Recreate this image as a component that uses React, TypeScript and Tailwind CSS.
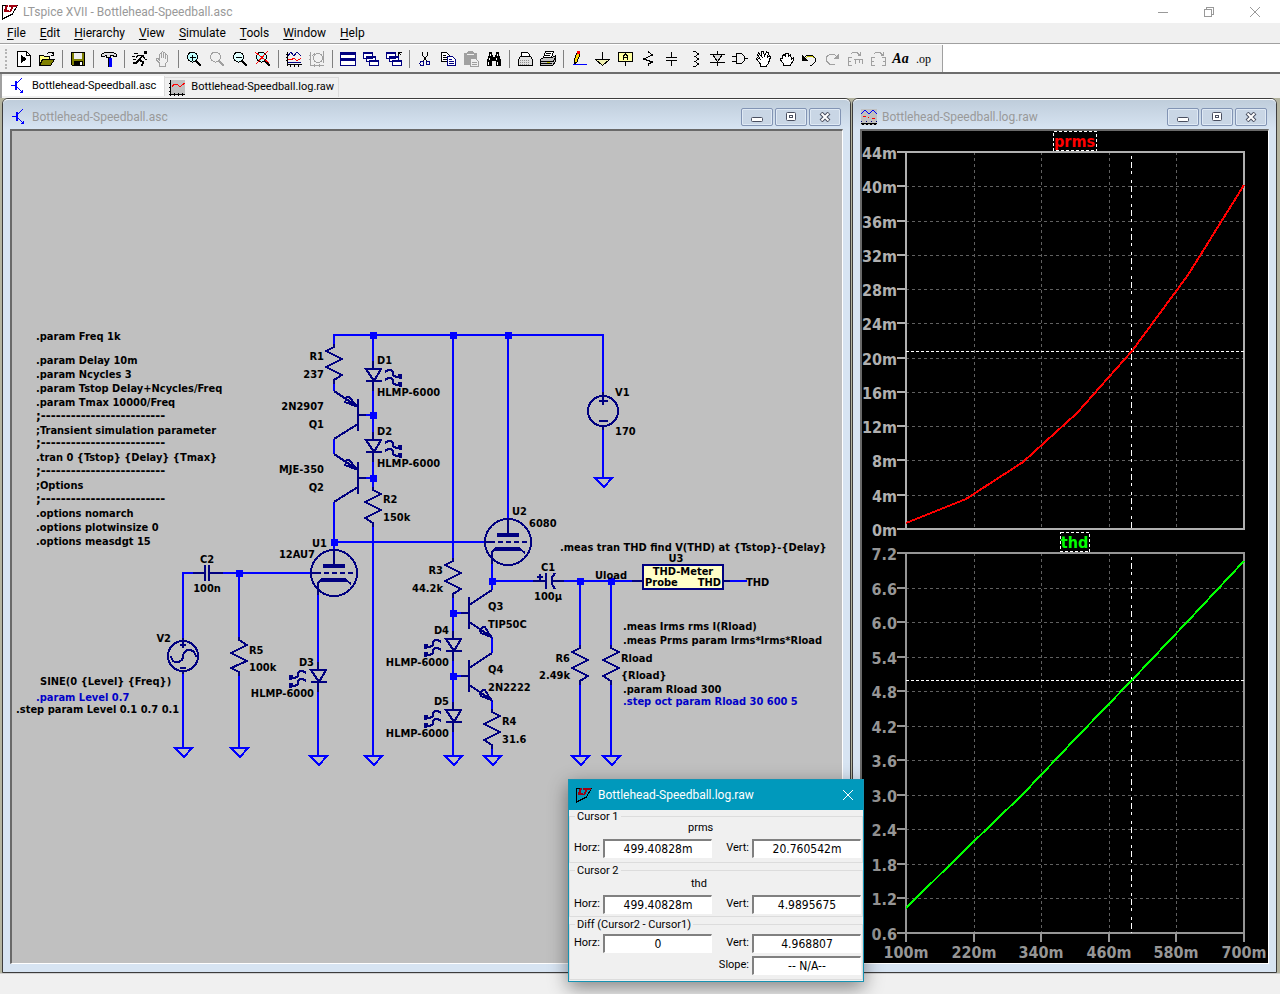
import type { ReactNode } from "react";

const WIRE = "#0000ff";
const PART = "#000080";

/* ---------- toolbar ---------- */

function Svg16({ children }: { children: ReactNode }) {
  return (
    <svg width="16" height="16" viewBox="0 0 16 16" fill="none" stroke="#000" shapeRendering="crispEdges">
      {children}
    </svg>
  );
}

const GREY = "#a0a0a0";

function Lens({ stroke = "#000", glass = "#fff", children }: { stroke?: string; glass?: string; children?: ReactNode }) {
  return (
    <Svg16>
      <circle cx="6.5" cy="6" r="5" fill={glass} stroke={stroke} />
      <path d="M10 10l5 5" stroke={stroke} strokeWidth="2" />
      {children}
    </Svg16>
  );
}

function Windows({ arrow = false }: { arrow?: boolean }) {
  return (
    <Svg16>
      <g fill="#fff" stroke={PART}>
        <path d="M.5 1.500h9v6h-9zM3.500 5.500h9v5h-9zM6.500 9.500h9v5h-9z" />
        <path d="M0 2h10M3 6h10M6 10h10" strokeWidth="2" />
      </g>
      {arrow && <path d="M12.500 4.500v-3h3M12.500 1.500l3 3" />}
    </Svg16>
  );
}

function Hand({ stroke = "#000", fill = "#fff" }: { stroke?: string; fill?: string }) {
  return (
    <Svg16>
      <path d="M4.500 15v-3L1.500 9V7.500h1.500L4.500 9V3.500l1-1 1 1V7V1.500l1-1 1 1V7V2.500l1-1 1 1V8V4.500l1-1 1 1V10l-2 3v2z" fill={fill} stroke={stroke} />
    </Svg16>
  );
}

type Tool = { name: string; icon: ReactNode } | "sep";

const TOOLS: Tool[] = [
  {
    name: "Run",
    icon: <Svg16><path d="M1.500 .5h9l4 4v11h-13z" fill="#fff" /><path d="M10.500 1v3.500h4" /><path d="M5 4v8l6-4z" fill="#000" stroke="none" /></Svg16>,
  },
  {
    name: "Open",
    icon: (
      <Svg16>
        <path d="M.5 14V4.500h4l1 1h5v3" fill="#ffff80" />
        <path d="M.5 14.500l3-6h12l-4 6z" fill="#808000" />
        <path d="M8.500 2.500l2-1.500h2l2 2.500M14.500 1v3h-3" />
      </Svg16>
    ),
  },
  "sep",
  {
    name: "Save",
    icon: <Svg16><path d="M1.500 1.500h13v13h-12l-1-1z" fill="#808000" /><path d="M4 2h8v6H4z" fill="#f0f0f0" stroke="none" /><path d="M4 10h9v5H4z" fill="#000" stroke="none" /><path d="M10 11h2v3h-2z" fill="#fff" stroke="none" /></Svg16>,
  },
  "sep",
  {
    name: "Control Panel",
    icon: (
      <Svg16>
        <path d="M.5 5.500v-2l3-2h9l3 2v2h-2l-2-1h-2v2h-4v-2h-1l-1 1z" fill="#e0e0e0" />
        <path d="M7 7h4v9H7z" fill={WIRE} stroke="none" />
        <path d="M7.500 7v9" />
      </Svg16>
    ),
  },
  "sep",
  {
    name: "Simulate",
    icon: <Svg16><path d="M12 0h3v3h-3z" fill="#000" stroke="none" /><path d="M11 4L7 9M7 9l4 2-1 4M7 9l-3 3H1" strokeWidth="2" /><path d="M10 4.500H6l-2 2M11 5l2 3h2M2 2.500h4M0 5.500h3M1 8.500h3" /></Svg16>,
  },
  { name: "Halt", icon: <Hand stroke={GREY} fill="#f0f0f0" /> },
  "sep",
  { name: "Zoom in", icon: <Lens glass="#c0ffff"><path d="M4 6.500h6M6.500 4v6" /></Lens> },
  { name: "Zoom to area", icon: <Lens stroke={GREY} glass="#f0f0f0" /> },
  { name: "Zoom out", icon: <Lens glass="#e0ffff"><path d="M4 6.500h6" /></Lens> },
  { name: "Zoom extents", icon: <Lens glass="#c0ffff"><path d="M0 1l14 11M13 0L1 13" stroke="#ff0000" /></Lens> },
  "sep",
  {
    name: "Autorange",
    icon: (
      <Svg16>
        <path d="M1.500 1v14M1 13.500h15M0 3.500h2M0 6.500h2M0 9.500h2M4.500 13v3M8.500 13v3M12.500 13v3" />
        <path d="M2 5l3-4 3 4 3-4 4 4" stroke={PART} />
        <path d="M2 8.500h3l3-1 3 2 4-2" stroke="#ff0000" />
        <path d="M2 11.500h13" stroke={PART} />
      </Svg16>
    ),
  },
  {
    name: "Pick visible traces",
    icon: <Svg16><g stroke={GREY}><path d="M1.500 1v14M1 14.500h14M0 4.500h2M0 8.500h2M5.500 13v3M10.500 13v3" /><circle cx="9" cy="7" r="4.500" /><path d="M6 2L3 5M14.500 0v12" /></g></Svg16>,
  },
  "sep",
  {
    name: "Tile windows",
    icon: <Svg16><path d="M.5 1.500h15v13H.5z" fill="#fff" stroke={PART} /><path d="M0 2.500h16M0 8.500h16" stroke={PART} strokeWidth="3" /></Svg16>,
  },
  { name: "Cascade windows", icon: <Windows /> },
  { name: "Close all windows", icon: <Windows arrow /> },
  "sep",
  {
    name: "Cut",
    icon: <Svg16><path d="M5.500 1v3l4 6M10.500 1v3l-4 6" /><g stroke={PART}><circle cx="5" cy="12.500" r="2" /><circle cx="11" cy="12" r="2" /></g></Svg16>,
  },
  {
    name: "Copy",
    icon: (
      <Svg16>
        <path d="M1.500 1.500h5l3 3v6h-8z" fill="#fff" />
        <path d="M3 4.500h3M3 6.500h4M3 8.500h4" />
        <path d="M7.500 5.500h5l3 3v6h-8z" fill="#fff" stroke={PART} />
        <path d="M9 8.500h3M9 10.500h5M9 12.500h5" stroke={PART} />
      </Svg16>
    ),
  },
  {
    name: "Paste",
    icon: <Svg16><path d="M1 2h3l1-2h5l1 2h3v12H1z" fill={GREY} stroke="none" /><path d="M7.500 7.500h5l3 3v5h-8z" fill="#f0f0f0" stroke={GREY} /><path d="M9 11.500h5M9 13.500h5" stroke={GREY} /><path d="M4 3.500h7" stroke="#f0f0f0" /></Svg16>,
  },
  {
    name: "Find",
    icon: (
      <Svg16>
        <path d="M3 1h3v3h1v2h2V4h1V1h3v3l2 5v6h-5v-5H6v5H1V9l2-5z" fill="#000" stroke="none" />
        <path d="M4.500 3v2M3.500 7v2M2.500 11v3M11.500 3v2M10.500 7v2M11.500 11v3" stroke="#fff" />
      </Svg16>
    ),
  },
  "sep",
  {
    name: "Print setup",
    icon: <Svg16><path d="M4.500 6V1.500h6l2 2V6" fill="#fff" /><path d="M1.500 8.500l2-3h10l2 3v6h-14z" fill="#e0e0e0" /><path d="M3 9.500h10M3 11.500h10M3 13.500h10" stroke="#909090" strokeDasharray="1 1" /></Svg16>,
  },
  {
    name: "Print",
    icon: (
      <Svg16>
        <path d="M3.500 7l2-6.500h8l-2 6.500" fill="#fff" />
        <path d="M6 2.500h5M5 4.500h5" />
        <path d="M.5 8.500l3-2h9l3-2v6l-3 4H.5z" fill="#c0c0c0" />
        <path d="M1 10.500h12l2-3M1 12.500h11" />
        <path d="M7 11.500h3" stroke="#c0c000" />
      </Svg16>
    ),
  },
  "sep",
  {
    name: "Wire",
    icon: <Svg16><path d="M3 9l3-7 3 1-3 8-3 2z" fill="#ffd700" /><path d="M6 0h3v3H6z" fill="#ff0000" stroke="none" /><path d="M2 13.500h14" stroke={WIRE} /></Svg16>,
  },
  { name: "Ground", icon: <Svg16><path d="M8.500 1v7" /><path d="M1.500 8.500h14l-7 6z" fill="#f0f0b0" /></Svg16> },
  { name: "Label net", icon: <Svg16><path d="M1.500 1.500h14v9h-14z" fill="#ffffa0" /><path d="M6.500 9V5l2-2 2 2v4M6.500 6.500h4M8.500 11v4" /></Svg16> },
  { name: "Resistor", icon: <Svg16><path d="M8.500 0v1l4 3-9 4 9 3-4 2v2" /></Svg16> },
  { name: "Capacitor", icon: <Svg16><path d="M8.500 1v6M8.500 10v5M3 6.500h11M3 9.500h11" /></Svg16> },
  { name: "Inductor", icon: <Svg16><path d="M7 .5h2l3 2v1l-3 2H8h1l3 2v1l-3 2H8h1l3 2v1l-3 2H7" /></Svg16> },
  { name: "Diode", icon: <Svg16><path d="M8.500 0v15M1 3.500h15M1 11.500h15" /><path d="M3.500 3.500h10l-5 7z" fill="#d8d8d8" /></Svg16> },
  { name: "Component", icon: <Svg16><path d="M4.500 2.500h5l3 3v4l-3 3h-5zM0 5.500h4M0 10.500h4M13 7.500h3" /></Svg16> },
  {
    name: "Move",
    icon: <Svg16><path d="M5.500 15v-2L1.500 8l1-1.500L5 8 2.500 3.500l1-1.500L7 6 6.500 1l2-.5L9.500 5l2-4 2 1-1 4 2-1 1 1-2 6-2 3z" fill="#fff" /></Svg16>,
  },
  {
    name: "Drag",
    icon: <Svg16><path d="M5.500 14.500v-2L2.500 9V7.500h2V5l1.500-1.500L7.500 5l.5-2.500h2L10.500 5l2-1L13.500 8l1.500-1v3l-3 4.500z" fill="#fff" /></Svg16>,
  },
  { name: "Undo", icon: <Svg16><path d="M3 7l3-3h5l3 3v4l-3 3H9" /><path d="M4 8l3-3h4l2 2" stroke="#c0c000" /><path d="M1 4v6h6z" fill="#000" stroke="none" /></Svg16> },
  { name: "Redo", icon: <Svg16><g stroke={GREY}><path d="M13 6l-3-3H6L2.500 6v4l3 3h5" /><path d="M15 2v6H9z" fill={GREY} stroke="none" /></g></Svg16> },
  { name: "Rotate", icon: <Svg16><g stroke={GREY}><path d="M4 3l2-2h4l3 4M13.500 1v3h-3M1.500 6v9M1 6.500h4M1 10.500h3M1 14.500h4" /><path d="M7 8.500h9M8.500 8v5M12.500 8v4M15.500 8v5" /></g></Svg16> },
  { name: "Mirror", icon: <Svg16><g stroke={GREY}><path d="M4 3l2-2h4l3 4M13.500 1v3h-3M1.500 6v9M1 6.500h4M1 10.500h3M1 14.500h4M15.500 6v9M12 6.500h4M13 10.500h3M12 14.500h4" /></g></Svg16> },
  { name: "Text", icon: <span className="font-['Liberation_Serif',serif] text-[14px] font-bold italic leading-4">Aa</span> },
  { name: "SPICE directive", icon: <span className="font-['Liberation_Serif',serif] text-[12px] leading-3">.op</span> },
];

function Toolbar() {
  return (
    <div className="flex h-[30px] shrink-0 border-b-2 border-[#6d6d6d] bg-white pt-px">
      <div role="toolbar" className="flex w-[943px] items-center border-r border-[#a0a0a0] bg-[#f0f0f0] pl-[5px]">
        <span className="mr-[5px] h-5 w-[2px] border-l-2 border-dotted border-[#b4b4b4]" />
        {TOOLS.map((t, i) =>
          t === "sep" ? (
            <span key={i} className="flex w-2 shrink-0 justify-center">
              <span className="h-[18px] w-px bg-[#808080]" />
            </span>
          ) : (
            <button key={i} type="button" aria-label={t.name} className="flex h-[22px] w-[23px] shrink-0 items-center justify-center">
              {t.icon}
            </button>
          ),
        )}
      </div>
    </div>
  );
}

/* ---------- window chrome ---------- */

function LtLogo() {
  return (
    <svg width="16" height="16" viewBox="0 0 16 16" shapeRendering="crispEdges" fill="none">
      <path d="M.5 1v14l10-5 5-9" stroke="#000" />
      <path d="M0 1.500h4" stroke="#000" />
      <path d="M5 1L3 7h4" stroke="#a00010" strokeWidth="2" />
      <path d="M7 1.500h8M11 2L8 8" stroke="#a00010" strokeWidth="2" />
    </svg>
  );
}

function SchematicIcon() {
  return (
    <svg width="16" height="16" viewBox="0 0 16 16" shapeRendering="crispEdges" fill="none" stroke={WIRE}>
      <path d="M1 7.500h5" />
      <path d="M6 3v9" strokeWidth="2" />
      <path d="M7 5l5-5M7 9l5 5" />
      <path d="M13 15H9l4-4z" fill={WIRE} stroke="none" />
    </svg>
  );
}

function PlotIcon() {
  return (
    <svg width="16" height="16" viewBox="0 0 16 16" shapeRendering="crispEdges" fill="none">
      <path d="M1 0h15v14H1z" fill="#c0c0c0" />
      <path d="M1.500 0v16M0 14.500h16M0 3.500h2M0 7.500h2M0 11.500h2M5.500 13v3M9.500 13v3M13.500 13v3" stroke="#000" />
      <path d="M3 7l2-3h3l2 2h2l4-3" stroke="#ff0000" />
    </svg>
  );
}

function TraceIcon() {
  return (
    <svg width="16" height="16" viewBox="0 0 16 16" shapeRendering="crispEdges" fill="none">
      <path d="M0 0h16v16H0z" fill="#c0c0c0" />
      <path d="M0 5l4-4 4 4 4-4 4 4" stroke={WIRE} />
      <path d="M2 7.500h3M7 8.500h1M11 9.500h3" stroke="#ff0000" />
      <path d="M0 12.500h16" stroke={PART} strokeDasharray="1 4" />
      <path d="M0 14.500h16" stroke="#000" />
      <path d="M1 15.500h15" stroke="#000" strokeDasharray="2 2" />
    </svg>
  );
}

const FRAME_BUTTON = "flex h-[18px] w-8 items-center justify-center rounded-[2px] border border-[#8294b4] bg-[#c9d6e5] shadow-[inset_0_0_0_1px_#dfe9f4]";

function MdiWindow({ title, icon, className, children }: { title: string; icon: ReactNode; className: string; children: ReactNode }) {
  return (
    <section className={`flex min-w-0 flex-col rounded-t-[6px] border border-[#3c3c3c] bg-[#d7e4f2] px-[7px] pb-2 ${className}`}>
      <header className="-mx-[7px] flex h-[30px] shrink-0 items-center rounded-t-[5px] border-t border-white bg-linear-to-b from-[#bfcddb] to-[#d7e4f2] px-2 pt-1">
        {icon}
        <h2 className="ml-[5px] flex-1 truncate font-['Roboto',sans-serif] text-[12px] leading-4 text-[#999]">{title}</h2>
        <div className="flex gap-[2px] pr-px">
          <button type="button" aria-label="Minimize" className={FRAME_BUTTON}>
            <svg width="12" height="10" viewBox="0 0 12 10" fill="#fff" stroke="#4a4f60"><rect x=".5" y="5.500" width="11" height="4" rx="1" /></svg>
          </button>
          <button type="button" aria-label="Restore" className={FRAME_BUTTON}>
            <svg width="12" height="10" viewBox="0 0 12 10" fill="#fff" stroke="#4a4f60"><rect x="1.500" y=".5" width="9" height="8" rx="1" /><rect x="4.500" y="3.500" width="3" height="2" /></svg>
          </button>
          <button type="button" aria-label="Close" className={FRAME_BUTTON}>
            <svg width="12" height="10" viewBox="0 0 12 10">
              <path d="M2 1l8 8M10 1L2 9" stroke="#4a4f60" strokeWidth="4" />
              <path d="M2.500 1.500l7 7M9.500 1.500l-7 7" stroke="#fff" strokeWidth="2" />
            </svg>
          </button>
        </div>
      </header>
      <div className="min-h-0 flex-1 overflow-hidden border-b border-l-2 border-r border-t-2 border-b-white border-l-[#696969] border-r-white border-t-[#696969]">
        {children}
      </div>
    </section>
  );
}

/* ---------- schematic ---------- */

function Ground({ x, y }: { x: number; y: number }) {
  return <path d={`M${x - 8} ${y}h17l-8 9z`} stroke={WIRE} />;
}

// dir = -1 bends to the left first
function Resistor({ x, y, dir = 1, tall = true }: { x: number; y: number; dir?: number; tall?: boolean }) {
  const ys = tall ? [4, 12, 20, 28, 33, 37] : [5, 13, 21, 28, 32, 36];
  const l = x - 8 * dir;
  const r = x + 8 * dir;
  return <path d={`M${x} ${y - 3}V${y}L${r} ${y + ys[0]}L${l} ${y + ys[1]}L${r} ${y + ys[2]}L${l} ${y + ys[3]}L${x} ${y + ys[4]}V${y + ys[5]}`} />;
}

function Led({ x, y, flip = false }: { x: number; y: number; flip?: boolean }) {
  return (
    <g transform={`translate(${x} ${y})`}>
      <path d="M0 -8V0M-7 0H8L1 12ZM-7 12H9M0 12V22" />
      <g transform={flip ? "scale(-1 1)" : undefined}>
        <path d="M12 3L15 1H18L20 3V6L23 8H27M12 11L15 9H18L20 11V14L23 16H27" />
        <path d="M25 5h4v5h-2l-2 -1zM25 13h4v5h-2l-2 -1z" fill={PART} stroke="none" />
      </g>
    </g>
  );
}

function Pnp({ x, y }: { x: number; y: number }) {
  return (
    <g transform={`translate(${x} ${y})`}>
      <path d="M0 -16V16M0 0H8M0 -8L-24 -24M0 9L-24 24M0 -8L-13 -13L-11 -18H-9Z" />
    </g>
  );
}

function Npn({ x, y }: { x: number; y: number }) {
  return (
    <g transform={`translate(${x} ${y})`}>
      <path d="M0 -16V16M0 0H-8M0 -8L23 -23M0 9L23 24M22 24L12 20L11 17L14 14H16Z" />
    </g>
  );
}

function Triode({ x, y }: { x: number; y: number }) {
  return (
    <g transform={`translate(${x} ${y})`}>
      <circle r="23" />
      <path d="M0 -23V-8M-23 0H-13M-16 22V10L-13 7M12 7L17 11" />
      <path d="M-10 0H19" strokeDasharray="5 3" />
      <path d="M-11 -7H11M-13 7H12" strokeWidth="4" />
    </g>
  );
}

const NODES = [
  [373, 335], [453, 335], [508, 335], [373, 415], [373, 478], [334, 542],
  [239, 573], [453, 613], [453, 676], [492, 581], [580, 581], [611, 581],
];

const RULE = ";" + "-".repeat(25);

type Label = [text: string, x: number, y: number, anchor?: "end" | "middle", color?: string];

const LABELS: Label[] = [
  [".param Freq 1k", 36, 340],
  [".param Delay 10m", 36, 364],
  [".param Ncycles 3", 36, 378],
  [".param Tstop Delay+Ncycles/Freq", 36, 392],
  [".param Tmax 10000/Freq", 36, 406],
  [RULE, 36, 420],
  [";Transient simulation parameter", 36, 434],
  [RULE, 36, 447],
  [".tran 0 {Tstop} {Delay} {Tmax}", 36, 461],
  [RULE, 36, 475],
  [";Options", 36, 489],
  [RULE, 36, 503],
  [".options nomarch", 36, 517],
  [".options plotwinsize 0", 36, 531],
  [".options measdgt 15", 36, 545],
  ["R1", 324, 360, "end"], ["237", 324, 378, "end"],
  ["2N2907", 324, 410, "end"], ["Q1", 324, 428, "end"],
  ["MJE-350", 324, 473, "end"], ["Q2", 324, 491, "end"],
  ["D1", 377, 364], ["HLMP-6000", 377, 396],
  ["D2", 377, 435], ["HLMP-6000", 377, 467],
  ["R2", 383, 503], ["150k", 383, 521],
  ["U1", 327, 547, "end"], ["12AU7", 315, 558, "end"],
  ["C2", 207, 563, "middle"], ["100n", 207, 592, "middle"],
  ["V2", 171, 642, "end"], ["R5", 249, 654], ["100k", 249, 671],
  ["D3", 314, 666, "end"], ["HLMP-6000", 314, 697, "end"],
  ["SINE(0 {Level} {Freq})", 40, 685],
  [".param Level 0.7", 36, 701, undefined, "#0000c8"],
  [".step param Level 0.1 0.7 0.1", 16, 713],
  ["R3", 443, 574, "end"], ["44.2k", 443, 592, "end"],
  ["D4", 449, 634, "end"], ["HLMP-6000", 449, 666, "end"],
  ["D5", 449, 705, "end"], ["HLMP-6000", 449, 737, "end"],
  ["Q3", 488, 610], ["TIP50C", 488, 628],
  ["Q4", 488, 673], ["2N2222", 488, 691],
  ["R4", 502, 725], ["31.6", 502, 743],
  ["U2", 512, 515], ["6080", 529, 527],
  ["C1", 548, 571, "middle"], ["100µ", 548, 600, "middle"],
  ["Uload", 595, 579],
  [".meas tran THD find V(THD) at {Tstop}-{Delay}", 560, 551],
  ["U3", 676, 562, "middle"],
  ["THD-Meter", 683, 575, "middle"], ["Probe", 645, 586], ["THD", 721, 586, "end"],
  ["THD", 746, 586],
  [".meas Irms rms I(Rload)", 623, 630],
  [".meas Prms param Irms*Irms*Rload", 623, 644],
  ["R6", 570, 662, "end"], ["2.49k", 570, 679, "end"],
  ["Rload", 621, 662], ["{Rload}", 621, 679],
  [".param Rload 300", 623, 693],
  [".step oct param Rload 30 600 5", 623, 705, undefined, "#0000c8"],
  ["V1", 615, 396], ["170", 615, 435],
];

function Schematic() {
  return (
    <svg width="830" height="832" viewBox="12 131 830 832" fill="none" strokeWidth="2" shapeRendering="crispEdges">
      <g stroke={WIRE}>
        <path d="M334 345V335H603V392M603 430V478" />
        <path d="M373 335V361M373 391V432M373 462V487M373 526V756" />
        <path d="M334 384V391M334 439V454M334 502V550M334 542H485" />
        <path d="M453 335V558M453 598V631M453 661V702M453 732V756" />
        <path d="M508 335V519M492 564V590M492 637V653M492 700V710M492 748V756" />
        <path d="M492 581H533M564 581H632M730 581H747M580 581V646M611 581V646M580 684V756M611 684V756" />
        <path d="M193 573H183V638M183 674V748M223 573H311M239 573V638M239 675V748" />
        <path d="M318 595V662M318 692V756M366 415H373M366 478H373M453 613H461M453 676H461" />
      </g>
      <Ground x={603} y={478} />
      <Ground x={183} y={748} />
      <Ground x={239} y={748} />
      {[318, 373, 453, 492, 580, 611].map((x) => (
        <Ground key={x} x={x} y={756} />
      ))}

      <g stroke={PART}>
        <Resistor x={334} y={347} dir={-1} />
        <Resistor x={373} y={490} />
        <Resistor x={453} y={561} dir={-1} />
        <Resistor x={492} y={712} />
        <Resistor x={239} y={640} tall={false} />
        <Resistor x={580} y={648} dir={-1} />
        <Resistor x={611} y={648} />
        <Led x={373} y={369} />
        <Led x={373} y={440} />
        <Led x={318} y={670} flip />
        <Led x={453} y={639} flip />
        <Led x={453} y={710} flip />
        <Pnp x={358} y={415} />
        <Pnp x={358} y={478} />
        <Npn x={469} y={613} />
        <Npn x={469} y={676} />
        <Triode x={334} y={573} />
        <Triode x={508} y={542} />
        {/* V1 */}
        <circle cx="603" cy="411" r="15" />
        <path d="M603 392V405M599 401H608M599 421H608M603 426V430" />
        {/* V2 */}
        <circle cx="183" cy="656" r="15" />
        <path d="M183 638V648M180 645H186M180 668H186M183 671V674" />
        <path d="M171 656q1 7 7 6q5 -1 5 -6q1 -6 6 -6q6 0 7 7" />
        {/* C1, C2 */}
        <path d="M533 581H546M546 573V589M555 573Q548 581 555 589M552 581H564M537 577H543M540 574V580" />
        <path d="M193 573H205M205 565V581M209 565V581M209 573H223" />
        {/* U3 */}
        <path d="M632 581H643M723 581H730" />
        <rect x="643" y="565" width="80" height="24" fill="#ffffc8" />
      </g>

      {NODES.map(([x, y]) => (
        <rect key={`${x}-${y}`} x={x - 3} y={y - 3} width="7" height="7" fill={WIRE} />
      ))}

      <g className="font-['DejaVu_Sans_Condensed','DejaVu_Sans',sans-serif] text-[11px] font-bold">
        {LABELS.map(([text, x, y, anchor, color]) => (
          <text
            key={`${text}-${x}-${y}`}
            x={x}
            y={y}
            textAnchor={anchor}
            fill={color ?? "#000"}
            className={text === RULE ? "font-['DejaVu_Sans',sans-serif] text-[12px]" : undefined}
          >
            {text}
          </text>
        ))}
      </g>
    </svg>
  );
}

/* ---------- waveforms ---------- */

const X0 = 906;
const X1 = 1244;
const XTICKS = [906, 974, 1041, 1109, 1176, 1244];
const XLABELS = ["100m", "220m", "340m", "460m", "580m", "700m"];
const CURSOR_X = 1131;

interface PaneProps {
  name: string;
  color: string;
  axis: string;
  top: number;
  bottom: number;
  labels: string[];
  cursorY: number;
  points: string;
  box: [x: number, y: number, w: number];
}

function Pane({ name, color, axis, top, bottom, labels, cursorY, points, box }: PaneProps) {
  const step = (bottom - top) / (labels.length - 1);
  const rows = labels.map((_, i) => Math.round(top + i * step));
  return (
    <g>
      <g stroke="#606060" strokeDasharray="3 3">
        {rows.slice(1, -1).map((y) => <path key={y} d={`M${X0} ${y + 0.5}H${X1}`} />)}
        {XTICKS.slice(1, -1).map((x) => <path key={x} d={`M${x + 0.5} ${top}V${bottom}`} />)}
      </g>
      <g stroke={axis} strokeWidth="2">
        <rect x={X0} y={top} width={X1 - X0} height={bottom - top} />
        {rows.map((y) => <path key={y} d={`M${X0 - 9} ${y}H${X0}`} />)}
      </g>
      <path d={`M${X0} ${cursorY + 0.5}H${X1}`} stroke="#fff" strokeDasharray="3 2" />
      <path d={`M${CURSOR_X + 0.5} ${top + 4}V${bottom}`} stroke="#fff" strokeDasharray="3 3 6 3 3 6" />
      <polyline points={points} stroke={color} strokeWidth="2" />
      <g fill={axis} textAnchor="end">
        {labels.map((l, i) => <text key={l} x={X0 - 9} y={rows[i] + 7}>{l}</text>)}
      </g>
      <rect x={box[0] + 0.5} y={box[1] + 0.5} width={box[2]} height="19" stroke="#fff" strokeDasharray="3 2" />
      <text x={box[0] + box[2] / 2} y={box[1] + 16} textAnchor="middle" fill={color}>{name}</text>
    </g>
  );
}

function Waveforms() {
  return (
    <svg width="405" height="832" viewBox="862 131 405 832" fill="none" shapeRendering="crispEdges" className="font-['DejaVu_Sans_Condensed','DejaVu_Sans',sans-serif] text-[16px] font-bold">
      <Pane
        name="prms"
        color="#ff0000"
        axis="#b0b0b0"
        top={152}
        bottom={529}
        labels={["44m", "40m", "36m", "32m", "28m", "24m", "20m", "16m", "12m", "8m", "4m", "0m"]}
        cursorY={351}
        points="906,523 966,499 1023,462 1077,413 1132,351 1188,275 1244,185"
        box={[1053, 131, 43]}
      />
      <Pane
        name="thd"
        color="#00ff00"
        axis="#969696"
        top={553}
        bottom={933}
        labels={["7.2", "6.6", "6.0", "5.4", "4.8", "4.2", "3.6", "3.0", "2.4", "1.8", "1.2", "0.6"]}
        cursorY={680}
        points="906,908 966,849 1023,794 1077,737 1132,680 1188,621 1244,561"
        box={[1060, 532, 29]}
      />
      {XTICKS.map((x, i) => (
        <g key={x}>
          <path d={`M${x} 933v9`} stroke="#969696" strokeWidth="2" />
          <text x={x} y="958" textAnchor="middle" fill="#969696">{XLABELS[i]}</text>
        </g>
      ))}
    </svg>
  );
}

/* ---------- cursor dialog ---------- */

function Readout({ id, label, value }: { id: string; label: string; value: string }) {
  return (
    <div className="flex items-center justify-end gap-[3px]">
      <label htmlFor={id} className="min-w-[25px] text-right">{label}</label>
      <input
        id={id}
        readOnly
        defaultValue={value}
        className="h-[19px] w-[109px] border-b border-l-2 border-r border-t-2 border-b-white border-l-[#808080] border-r-white border-t-[#808080] bg-white text-center font-['DejaVu_Sans_Condensed','DejaVu_Sans',sans-serif] text-[12px] leading-4 outline-none"
      />
    </div>
  );
}

const GROUP = "relative border border-[#dcdcdc] pl-1 pr-px";
const LEGEND = "absolute -top-[7px] left-[5px] bg-[#f0f0f0] px-[2px] leading-[14px]";

function CursorDialog() {
  return (
    <div role="dialog" aria-label="Bottlehead-Speedball.log.raw" className="absolute left-[568px] top-[779px] w-[296px] border border-[#1593b3] bg-[#f0f0f0] font-['Roboto',sans-serif] text-[11px] text-black shadow-[0_6px_18px_rgba(0,0,0,0.45)]">
      <header className="flex h-[30px] items-center bg-[#0099bc] pl-[7px] pr-[9px]">
        <LtLogo />
        <h2 className="ml-[6px] flex-1 text-[12px] leading-4 text-white">Bottlehead-Speedball.log.raw</h2>
        <button type="button" aria-label="Close">
          <svg width="12" height="12" viewBox="0 0 12 12" stroke="#fff"><path d="M1 1l10 10M11 1L1 11" /></svg>
        </button>
      </header>
      <div className="flex flex-col gap-[7px] pb-px pt-[6px]">
        <section className={`${GROUP} h-[47px]`}>
          <h3 className={LEGEND}>Cursor 1</h3>
          <p className="pl-[114px] pt-[3px] leading-4">prms</p>
          <div className="mt-[3px] flex justify-between">
            <Readout id="c1h" label="Horz:" value="499.40828m" />
            <Readout id="c1v" label="Vert:" value="20.760542m" />
          </div>
        </section>
        <section className={`${GROUP} h-[47px]`}>
          <h3 className={LEGEND}>Cursor 2</h3>
          <p className="pl-[117px] pt-[5px] leading-4">thd</p>
          <div className="mt-[3px] flex justify-between">
            <Readout id="c2h" label="Horz:" value="499.40828m" />
            <Readout id="c2v" label="Vert:" value="4.9895675" />
          </div>
        </section>
        <section className={`${GROUP} h-[56px] pt-[9px]`}>
          <h3 className={LEGEND}>Diff (Cursor2 - Cursor1)</h3>
          <div className="flex justify-between">
            <Readout id="dh" label="Horz:" value="0" />
            <Readout id="dv" label="Vert:" value="4.968807" />
          </div>
          <div className="mt-[3px]">
            <Readout id="slope" label="Slope:" value="-- N/A--" />
          </div>
        </section>
      </div>
    </div>
  );
}

const MENUS = ["File", "Edit", "Hierarchy", "View", "Simulate", "Tools", "Window", "Help"];

export default function App() {
  return (
    <div className="relative flex h-screen flex-col overflow-hidden bg-[#f0f0f0] font-['Roboto',sans-serif] text-[12px]">
      <header className="flex h-[23px] shrink-0 items-center bg-white pl-[2px] pr-[2px]">
        <LtLogo />
        <h1 className="ml-[5px] flex-1 leading-4 text-[#999]">LTspice XVII - Bottlehead-Speedball.asc</h1>
        <div className="flex text-[#999]">
          <button type="button" aria-label="Minimize" className="flex h-5 w-[46px] items-center justify-center">
            <svg width="10" height="10" viewBox="0 0 10 10" stroke="currentColor" shapeRendering="crispEdges"><path d="M0 5.500h10" /></svg>
          </button>
          <button type="button" aria-label="Restore" className="flex h-5 w-[45px] items-center justify-center">
            <svg width="10" height="10" viewBox="0 0 10 10" fill="none" stroke="currentColor" shapeRendering="crispEdges"><path d="M.5 2.500h7v7h-7zM2.500 2V.5h7v7H8" /></svg>
          </button>
          <button type="button" aria-label="Close" className="flex h-5 w-[47px] items-center justify-center">
            <svg width="10" height="10" viewBox="0 0 10 10" stroke="currentColor"><path d="M0 0l10 10M10 0L0 10" /></svg>
          </button>
        </div>
      </header>

      <nav className="flex h-[21px] shrink-0 gap-[14px] border-b border-[#a0a0a0] pl-[7px]">
        {MENUS.map((m) => (
          <button key={m} type="button" className="leading-5">
            <span className="underline underline-offset-2">{m[0]}</span>
            {m.slice(1)}
          </button>
        ))}
      </nav>

      <Toolbar />

      <div role="tablist" className="flex h-6 shrink-0 items-start border-l-2 border-[#a0a0a0] pt-[2px] text-[11px]">
        <button type="button" role="tab" aria-selected="true" className="flex h-5 items-center gap-[6px] border-r border-[#dcdcdc] bg-white px-2">
          <SchematicIcon />
          Bottlehead-Speedball.asc
        </button>
        <button type="button" role="tab" aria-selected="false" className="mt-px flex h-5 items-center gap-[6px] border-r border-t border-[#dcdcdc] px-1">
          <PlotIcon />
          Bottlehead-Speedball.log.raw
        </button>
      </div>

      <main className="flex min-h-0 flex-1 gap-px bg-[#b4b4a0] pl-[2px] pr-[3px]">
        <MdiWindow title="Bottlehead-Speedball.asc" icon={<SchematicIcon />} className="flex-1">
          <div className="h-full bg-[#c0c0c0]">
            <Schematic />
          </div>
        </MdiWindow>
        <MdiWindow title="Bottlehead-Speedball.log.raw" icon={<TraceIcon />} className="w-[425px] shrink-0">
          <div className="h-full bg-black">
            <Waveforms />
          </div>
        </MdiWindow>
      </main>

      <footer className="h-[21px] shrink-0 border-t border-[#d0d0d0]" />

      <CursorDialog />
    </div>
  );
}
